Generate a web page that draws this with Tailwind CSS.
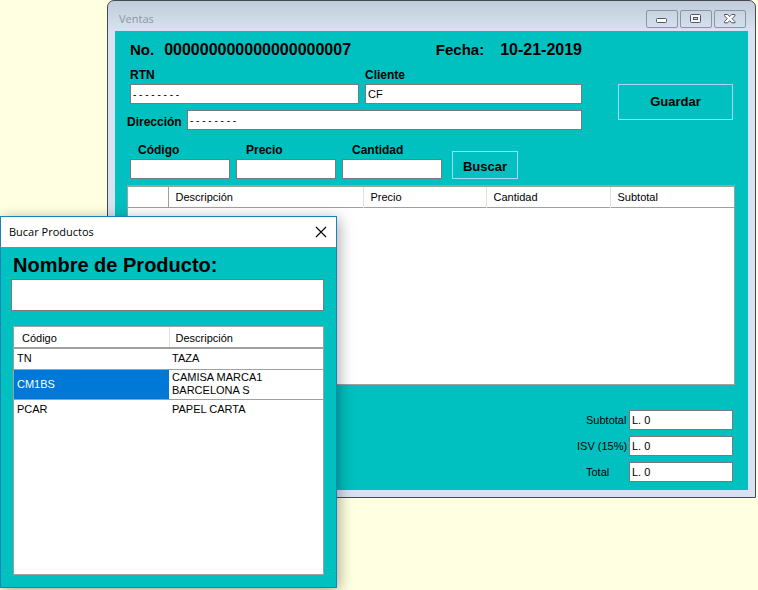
<!DOCTYPE html>
<html lang="es">
<head>
<meta charset="utf-8">
<title>Ventas</title>
<script src="https://cdn.jsdelivr.net/npm/@tailwindcss/browser@4"></script>
</head>
<body class="relative min-h-screen overflow-hidden bg-[#ffffe1] font-['Liberation_Sans',Arial,sans-serif] text-[11px] text-black">

<!-- Sales window -->
<main class="absolute top-0 right-[2px] left-[107px] rounded-t-[7px] border border-[#454a50] bg-[#d7e3f0] bg-linear-to-b from-[#c1ccdc] to-[#d7e3f0] to-[30px] px-[7px] pb-[7px]">
  <header class="flex h-[30px] items-center justify-between pr-[2px] pl-1 pt-[6px]">
    <h1 class="font-['Open_Sans',sans-serif] text-[11px] leading-4 text-[#8e959e]">Ventas</h1>
    <div class="flex gap-[2px]">
      <button type="button" aria-label="Minimizar" class="flex h-[18px] w-8 items-center justify-center rounded-[2px] border border-[#8b95a6]">
        <svg class="h-3 w-3" viewBox="0 0 12 12"><rect x=".5" y="5.500" width="10" height="4" rx="1" fill="#fff" stroke="#51565f"/></svg>
      </button>
      <button type="button" aria-label="Restaurar" class="flex h-[18px] w-8 items-center justify-center rounded-[2px] border border-[#8b95a6]">
        <svg class="h-3 w-3" viewBox="0 0 12 12"><rect x=".5" y="1.500" width="10" height="8" rx="1" fill="#f4f7fb" stroke="#51565f"/><rect x="3.500" y="4.500" width="4" height="2" fill="#d0d9e6" stroke="#51565f"/></svg>
      </button>
      <button type="button" aria-label="Cerrar" class="flex h-[18px] w-8 items-center justify-center rounded-[2px] border border-[#8b95a6]">
        <svg class="h-3 w-3" viewBox="0 0 12 12"><path d="M.5 1.500h3.200L5.700 3.600 7.700 1.500h3.200v1.300L8.100 5.700l2.800 2.800v1.300H7.700L5.700 7.700 3.700 9.800H.5V8.500l2.800-2.800L.5 2.800z" fill="#fff" stroke="#51565f" stroke-linejoin="round"/></svg>
      </button>
    </div>
  </header>

  <form class="bg-[#00c0c0] px-3 pt-[11px] pb-2">
    <div class="flex gap-9 pr-[3px]">
      <div class="flex-1">
        <div class="flex h-[25px] items-start justify-between pl-[3px] font-bold leading-4">
          <p class="flex gap-[10px] text-[15px]"><span>No.</span><span class="text-[16px]">000000000000000000007</span></p>
          <p class="flex gap-4 text-[15px]"><span>Fecha:</span><span class="text-[16px]">10-21-2019</span></p>
        </div>
        <div class="grid grid-cols-[229fr_217fr] gap-x-[6px] pl-[3px]">
          <div class="flex flex-col">
            <label for="rtn" class="text-[12px] leading-[17px] font-bold">RTN</label>
            <input id="rtn" value="- - - - - - - -" class="h-5 w-full border border-[#7a7a7a] bg-white px-[2px] text-[10px]">
          </div>
          <div class="flex flex-col">
            <label for="cliente" class="text-[12px] leading-[17px] font-bold">Cliente</label>
            <input id="cliente" value="CF" class="h-5 w-full border border-[#7a7a7a] bg-white px-[2px]">
          </div>
        </div>
        <div class="mt-[6px] flex items-center">
          <label for="direccion" class="w-[60px] pt-1 text-[12px] leading-4 font-bold">Dirección</label>
          <input id="direccion" value="- - - - - - - -" class="h-5 min-w-0 flex-1 border border-[#7a7a7a] bg-white px-[2px] text-[10px]">
        </div>
      </div>
      <button type="button" class="mt-[42px] h-9 w-[115px] border border-[#a0d8f8] text-[13px] font-bold">Guardar</button>
    </div>

    <div class="mt-3 flex items-end gap-[6px] pl-[3px]">
      <div class="flex w-[100px] flex-col">
        <label for="codigo" class="pl-2 text-[12px] leading-[17px] font-bold">Código</label>
        <input id="codigo" class="h-5 w-full border border-[#7a7a7a] bg-white px-[2px]">
      </div>
      <div class="flex w-[100px] flex-col">
        <label for="precio" class="pl-[10px] text-[12px] leading-[17px] font-bold">Precio</label>
        <input id="precio" class="h-5 w-full border border-[#7a7a7a] bg-white px-[2px]">
      </div>
      <div class="flex w-[100px] flex-col">
        <label for="cantidad" class="pl-[10px] text-[12px] leading-[17px] font-bold">Cantidad</label>
        <input id="cantidad" class="h-5 w-full border border-[#7a7a7a] bg-white px-[2px]">
      </div>
      <button type="button" class="ml-1 h-7 w-[66px] border border-[#a0d8f8] pt-[3px] text-[13px] font-bold">Buscar</button>
    </div>

    <div class="mt-[6px] mr-px min-h-[200px] border border-[#a0a0a0] border-t-2 bg-white">
      <table class="w-full table-fixed border-collapse">
        <thead>
          <tr class="h-5 border-b border-[#a0a0a0] text-left">
            <td class="w-10 border-r border-[#a0a0a0]"></td>
            <th class="w-[195px] border-r border-[#e2e2e2] pl-[7px] font-normal">Descripción</th>
            <th class="w-[123px] border-r border-[#e2e2e2] pl-[7px] font-normal">Precio</th>
            <th class="w-[124px] border-r border-[#e2e2e2] pl-[7px] font-normal">Cantidad</th>
            <th class="pl-[7px] font-normal">Subtotal</th>
          </tr>
        </thead>
      </table>
    </div>

    <div class="mt-[25px] grid grid-cols-[52px_104px] items-center justify-end gap-y-[6px] pr-[3px]">
      <label for="subtotal" class="pl-[9px]">Subtotal</label>
      <input id="subtotal" value="L. 0" class="h-5 w-full border border-[#7a7a7a] bg-white px-[2px]">
      <label for="isv" class="whitespace-nowrap">ISV (15%)</label>
      <input id="isv" value="L. 0" class="h-5 w-full border border-[#7a7a7a] bg-white px-[2px]">
      <label for="total" class="pl-[9px]">Total</label>
      <input id="total" value="L. 0" class="h-5 w-full border border-[#7a7a7a] bg-white px-[2px]">
    </div>
  </form>
</main>

<!-- Product search dialog -->
<section role="dialog" aria-labelledby="buscar-titulo" class="absolute top-[216px] left-0 w-[337px] border border-[#1883b8] bg-[#00c0c0] shadow-[2px_3px_14px_rgba(0,0,0,0.35)]">
  <header class="flex h-[30px] items-center justify-between bg-white pr-[9px] pl-2">
    <h2 id="buscar-titulo" class="font-['Open_Sans',sans-serif] text-[11px] leading-4">Bucar Productos</h2>
    <button type="button" aria-label="Cerrar" class="flex h-3 w-3 items-center justify-center">
      <svg class="h-3 w-3" viewBox="0 0 12 12"><path d="M1 1l10 10M11 1L1 11" fill="none" stroke="#000" stroke-width="1.1"/></svg>
    </button>
  </header>
  <div class="px-3 pt-[6px] pb-3">
    <label for="nombre" class="block text-[20px] leading-6 font-bold">Nombre de Producto:</label>
    <div class="-ml-[2px] mt-[2px]">
      <input id="nombre" class="block h-8 w-full border border-[#7a7a7a] bg-white px-[2px] text-[16px]">
    </div>
    <div class="mt-[15px] min-h-[249px] border border-[#a0a0a0] bg-white">
      <table class="w-full table-fixed border-collapse text-left">
        <thead>
          <tr class="h-[21px] border-b-2 border-[#a0a0a0]">
            <th class="w-[155px] border-r border-[#e2e2e2] pt-[2px] pl-2 font-normal">Código</th>
            <th class="pt-[2px] pl-[6px] font-normal">Descripción</th>
          </tr>
        </thead>
        <tbody class="leading-[13px]">
          <tr class="h-[21px] border-b border-[#a0a0a0]"><td class="pl-[3px]">TN</td><td class="pl-[3px]">TAZA</td></tr>
          <tr class="h-[30px] border-b border-[#a0a0a0]"><td class="bg-[#0078d7] pl-[3px] text-white">CM1BS</td><td class="pl-[3px]">CAMISA MARCA1<br>BARCELONA S</td></tr>
          <tr class="h-[21px]"><td class="pl-[3px]">PCAR</td><td class="pl-[3px]">PAPEL CARTA</td></tr>
        </tbody>
      </table>
    </div>
  </div>
</section>
</body>
</html>
